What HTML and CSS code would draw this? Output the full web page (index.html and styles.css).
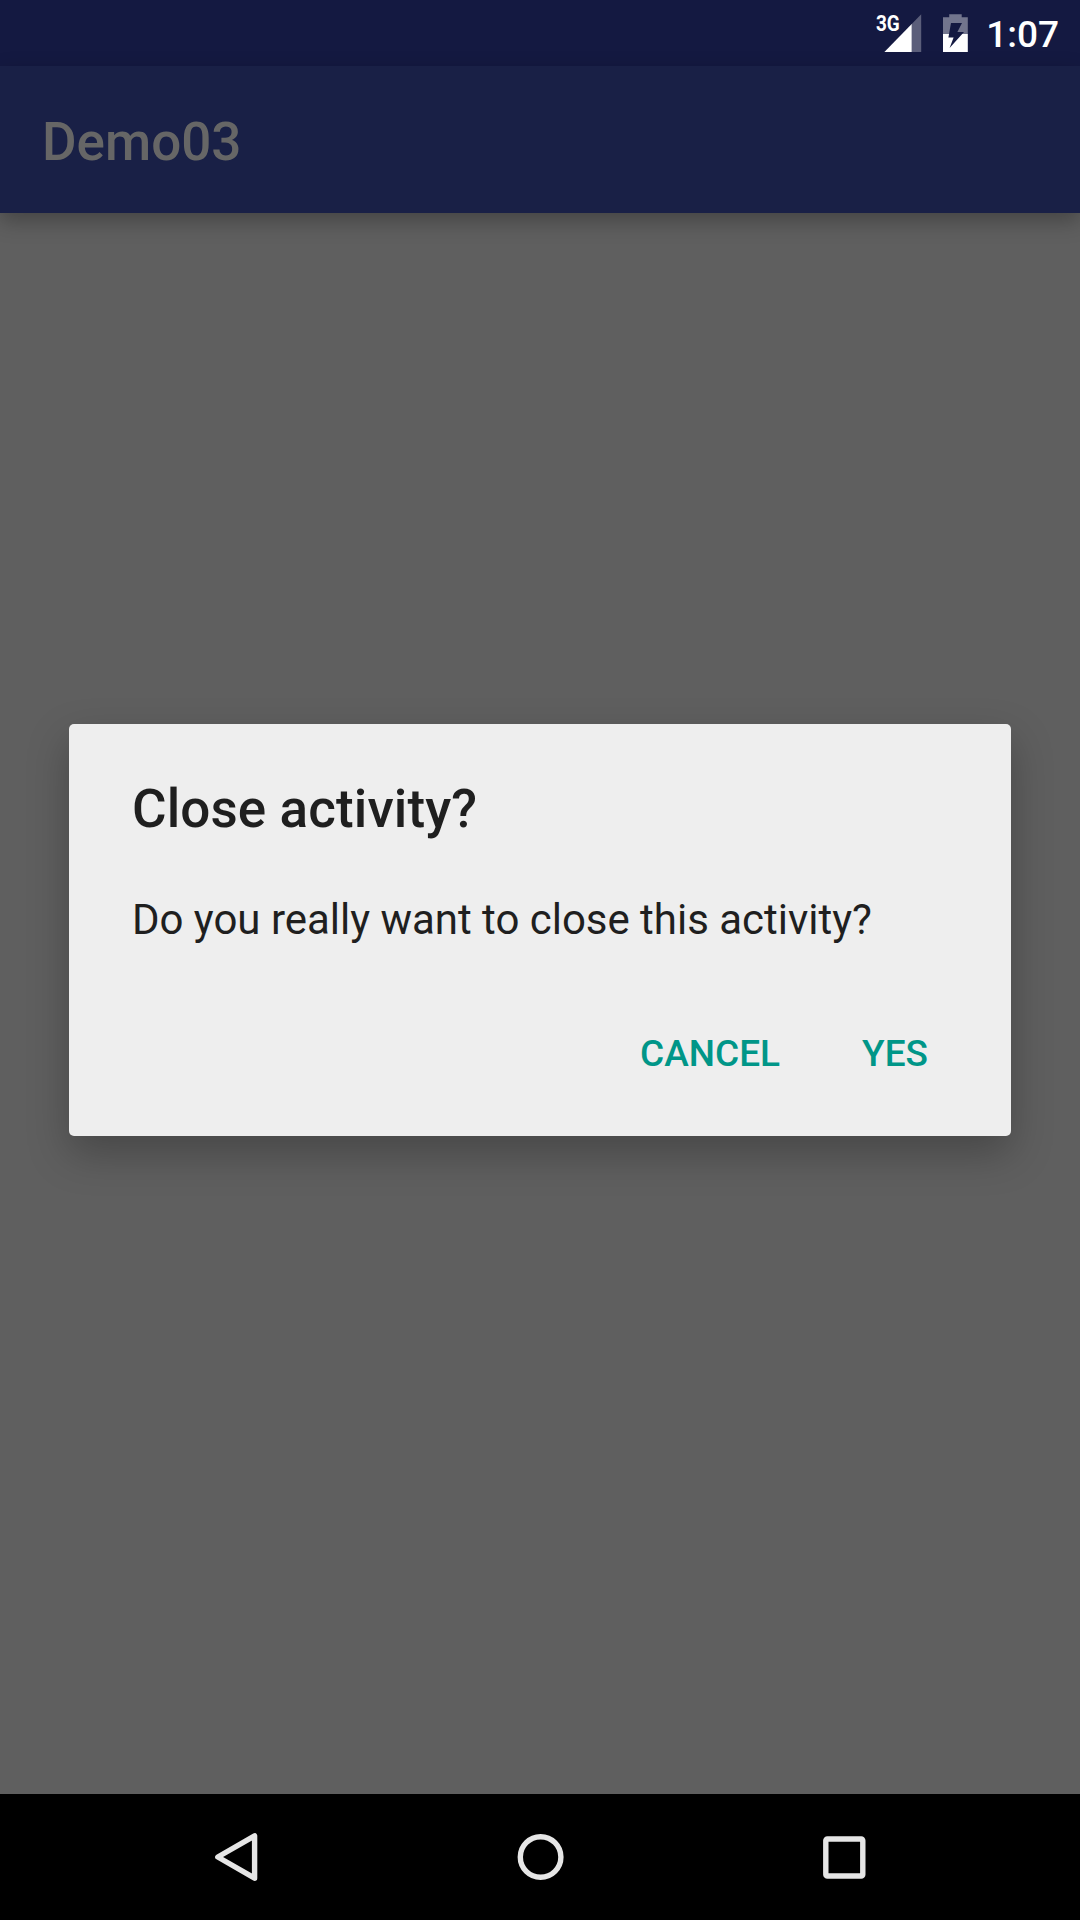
FILE: index.html
```html
<!DOCTYPE html>
<html lang="en">
<head>
<meta charset="utf-8">
<title>Demo03</title>
<link rel="stylesheet" href="styles.css">
</head>
<body>
<div class="screen">
  <header class="status-bar">
    <svg class="signal" width="50" height="48" viewBox="-4 -8 50 48">
      <path class="dim" d="M45.2 0.3V37.9H35.5V10.3z"/>
      <path class="lit" d="M35.7 10.1V37.9H8.4z"/>
      <text class="network" x="0" y="17.2" textLength="23.8" lengthAdjust="spacingAndGlyphs">3G</text>
    </svg>
    <svg class="battery" width="25" height="40" viewBox="0 0 25 40">
      <path class="dim" d="M6.2 0.2H18.7V3.2H24.8V20H0V3.2H6.2z"/>
      <path class="lit" d="M0 20H24.8V38H0z"/>
      <path class="bolt" d="M8 9H19L14.4 18H21L6.6 34L10.6 23.4H5.4z"/>
    </svg>
    <span class="clock">1:07</span>
  </header>
  <div class="app-bar"><h1 class="app-title">Demo03</h1></div>
  <main class="content">
    <section class="dialog" role="alertdialog">
      <h2 class="dialog-title">Close activity?</h2>
      <p class="dialog-message">Do you really want to close this activity?</p>
      <div class="actions">
        <button class="action">CANCEL</button>
        <button class="action">YES</button>
      </div>
    </section>
  </main>
  <nav class="nav-bar">
    <svg class="nav-icon" width="60" height="60" viewBox="0 0 60 60"><path d="M48.6 8.8V51.2L11.8 30z"/></svg>
    <svg class="nav-icon" width="60" height="60" viewBox="0 0 60 60"><circle cx="30.6" cy="30" r="20.3"/></svg>
    <svg class="nav-icon" width="60" height="60" viewBox="0 0 60 60"><rect x="11.8" y="12" width="37" height="37" rx="1.6"/></svg>
  </nav>
</div>
</body>
</html>
```
FILE: styles.css
```css
* { box-sizing: border-box; }

body {
  margin: 0;
  font-family: Roboto, "Noto Sans", sans-serif;
}

h1, h2, p { margin: 0; }

.screen {
  display: flex;
  flex-direction: column;
  width: 1080px;
  height: 1920px;
  overflow: hidden;
  background: #5f5f5f;
}

.status-bar {
  display: flex;
  justify-content: flex-end;
  height: 66px;
  padding: 14px 21px 0 0;
  background: #141941;
  color: #fff;
}

.signal {
  margin: -8px 21px 0 0;
  overflow: visible;
}
.battery { margin-right: 18px; }
.dim { fill: #72758d; }
.signal .dim { fill: #5b5e7a; }
.lit { fill: #fff; }
.bolt { fill: #141941; }

.network {
  fill: #fff;
  font-size: 21.5px;
  font-weight: 700;
}

.clock {
  font-size: 37px;
  font-weight: 500;
  line-height: 42px;
}

.app-bar {
  height: 147px;
  padding: 45px 42px 0;
  background: #192046;
  box-shadow: 0 8px 20px rgba(0, 0, 0, 0.28);
}

.app-title {
  color: #666;
  font-size: 53px;
  font-weight: 500;
  line-height: 62px;
}

.content {
  flex: 1;
  padding: 511px 69px 0;
}

.dialog {
  height: 412px;
  padding: 54px 63px 0;
  border-radius: 5px;
  background: #eee;
  box-shadow: 0 17px 42px rgba(0, 0, 0, 0.26);
  color: #1f1f1f;
}

.dialog-title {
  font-size: 53px;
  font-weight: 500;
  letter-spacing: 0.1px;
  line-height: 62px;
}

.dialog-message {
  margin-top: 55px;
  font-size: 42px;
  letter-spacing: -0.02px;
  line-height: 50px;
  white-space: nowrap;
}

.actions {
  display: flex;
  justify-content: flex-end;
  gap: 82px;
  margin-top: 87px;
  padding-right: 20px;
}

.action {
  padding: 0;
  border: 0;
  background: none;
  color: #009688;
  font: 500 37px/44px Roboto, "Noto Sans", sans-serif;
}

.nav-bar {
  display: flex;
  justify-content: center;
  align-items: center;
  gap: 244px;
  height: 126px;
  background: #000;
}

.nav-icon {
  fill: none;
  stroke: #e6e6e6;
  stroke-width: 5.4;
  stroke-linejoin: round;
}
```
